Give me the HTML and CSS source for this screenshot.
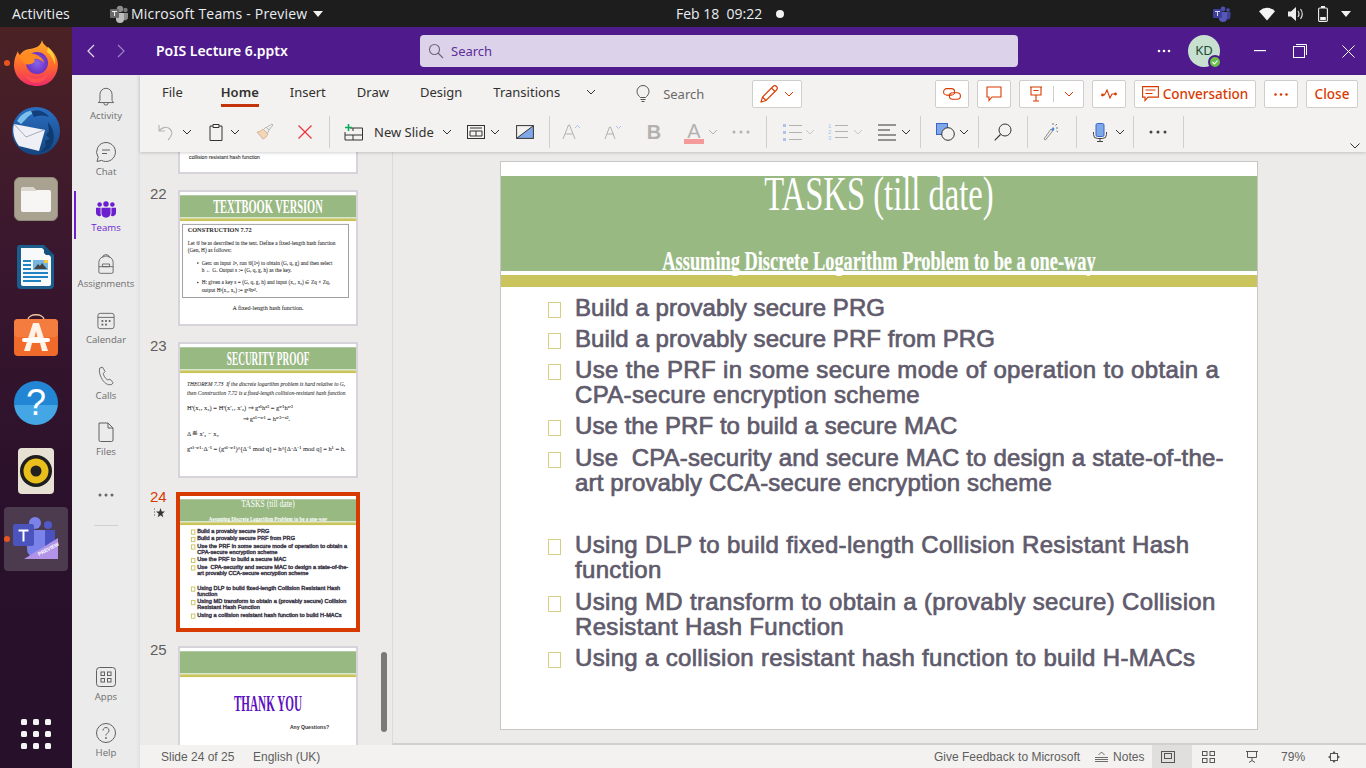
FILE: index.html
```html
<!DOCTYPE html>
<html lang="en">
<head>
<meta charset="utf-8">
<title>Microsoft Teams - Preview</title>
<link rel="stylesheet" href="styles.css">
</head>
<body>
<header class="topbar">
  <span class="activities">Activities</span>
  <svg class="app-mini" width="20" height="18" viewBox="0 0 20 18"><circle cx="11" cy="4" r="3.2" fill="#8d8d8d"/><circle cx="16.5" cy="5" r="2.2" fill="#777"/><path d="M7 8h8v6a4 4 0 0 1-8 0z" fill="#bdbdbd"/><path d="M15 8h4v5a3 3 0 0 1-4 2z" fill="#8a8a8a"/><rect x="1" y="4" width="9" height="9" rx="1" fill="#6a6a6a"/><path d="M3 6h5v1H6v4H5V7H3z" fill="#eee"/></svg>
  <span class="app-name">Microsoft Teams - Preview</span>
  <svg class="tri" width="10" height="6" viewBox="0 0 10 6"><path d="M0 0h10L5 6z" fill="#f2f2f2"/></svg>
  <span class="clock">Feb 18&nbsp; 09:22</span>
  <span class="rec-dot"></span>
  <svg class="tray-teams" width="18" height="16" viewBox="0 0 18 16"><circle cx="10" cy="3" r="2.4" fill="#4b4fae"/><circle cx="15" cy="4" r="1.8" fill="#4b4fae"/><path d="M6 6h8v6a4 4 0 0 1-8 0z" fill="#5558b8"/><path d="M14 6h3.500v5a3 3 0 0 1-3.500 2.500z" fill="#3f4296"/><rect x="0" y="3" width="9" height="9" rx="1" fill="#3d3f9a"/><path d="M2 5h5v1H5v4H4V6H2z" fill="#d8d8f0"/></svg>
  <svg class="tray-wifi" width="16" height="14" viewBox="0 0 16 14"><path d="M0 4.200Q8-2.500 16 4.200L8 13.500z" fill="#f4f4f4"/></svg>
  <svg class="tray-vol" width="16" height="14" viewBox="0 0 16 14"><path d="M0 4.500h3L8 0v14L3 9.500H0z" fill="#eee"/><path d="M10 4q2 3 0 6M12.500 2q3.500 5 0 10" stroke="#ddd" stroke-width="1.200" fill="none"/></svg>
  <svg class="tray-bat" width="10" height="16" viewBox="0 0 10 16"><rect x=".6" y="2" width="8.800" height="13.400" rx="1.200" fill="none" stroke="#eee" stroke-width="1.100"/><rect x="3" y="0" width="4" height="2" fill="#eee"/><rect x="2.200" y="11" width="5.600" height="3" fill="#eee"/></svg>
  <svg class="tray-tri" width="10" height="6" viewBox="0 0 10 6"><path d="M0 0h10L5 6z" fill="#f2f2f2"/></svg>
</header>

<div class="desktop">
  <nav class="dock">
    <div class="dock-cell">
      <span class="run-dot"></span>
      <svg width="48" height="48" viewBox="0 0 48 48"><defs><linearGradient id="ff1" x1="0" y1="0" x2="0" y2="1"><stop offset="0" stop-color="#ffb12a"/><stop offset=".55" stop-color="#ff6a2c"/><stop offset="1" stop-color="#ee2a6b"/></linearGradient><radialGradient id="ff2"><stop offset="0" stop-color="#8a63ec"/><stop offset="1" stop-color="#6a32c0"/></radialGradient></defs><path d="M30 1c1 6 7 7 11 12 5 6 6 13 4 19-3 10-11 15-20 15C12 47 2 38 2 26c0-6 2-10 4-14 0 2 1 3 2 4 2-4 7-6 10-6 6-1 11-3 12-9z" fill="url(#ff1)"/><circle cx="25" cy="24" r="11" fill="url(#ff2)"/><path d="M7 18c5-4 12-5 18-2 4 2 7 5 7 8-2-3-7-5-10-4 2 2 0 4-3 5-4 1-7 0-8-2-1-2-3-3-4-5z" fill="#ff8a1f"/><path d="M36 8c5 4 8 11 7 18-1-5-4-10-8-13z" fill="#ffcf3a"/><path d="M12 34c5 7 17 8 24 1-2 6-7 9-12 9-5 0-10-4-12-10z" fill="#ff4f50"/></svg>
    </div>
    <div class="dock-cell">
      <svg width="50" height="50" viewBox="0 0 50 50"><defs><linearGradient id="tb1" x1="0" y1="0" x2="0" y2="1"><stop offset="0" stop-color="#2a6fc4"/><stop offset="1" stop-color="#15457f"/></linearGradient></defs><circle cx="25" cy="25" r="24" fill="url(#tb1)"/><path d="M6 15c5-9 15-13 24-9-7 0-12 3-15 7l-5 5z" fill="#7cc0ee"/><path d="M20 5c6-2 14 0 18 6-5-2-10-2-15 0z" fill="#123f7a"/><path d="M3 18l26 5 5 1-6 21-20-5C3 34 1 25 3 18z" fill="#eef0f6"/><path d="M3 18l12 13 18-7" fill="none" stroke="#a8adbd" stroke-width="1"/><path d="M37 16c7 8 8 19 1 27l-9 4 6-7-1-5 5-2-4-4 3-4z" fill="#0f3a70"/></svg>
    </div>
    <div class="dock-cell">
      <div class="files-tile"><svg width="32" height="28" viewBox="0 0 32 28"><path d="M1 5a3 3 0 0 1 3-3h9l3 3h13a2 2 0 0 1 2 2v18a2 2 0 0 1-2 2H3a2 2 0 0 1-2-2z" fill="#f7f6f4"/><path d="M1 5a3 3 0 0 1 3-3h9l4 4H1z" fill="#dcd8cf"/></svg></div>
    </div>
    <div class="dock-cell">
      <svg width="38" height="46" viewBox="0 0 38 46"><path d="M3 1h24l10 10v30a4 4 0 0 1-4 4H4a4 4 0 0 1-4-4V4a3 3 0 0 1 3-3z" fill="#1b5e8e"/><path d="M4 4h21l9 9v27a2 2 0 0 1-2 2H6a2 2 0 0 1-2-2z" fill="#f8f9fa"/><path d="M27 1l10 10h-8l-2-2z" fill="#14517c"/><g fill="#2283c3"><rect x="6" y="16" width="8" height="2"/><rect x="6" y="20" width="8" height="2"/><rect x="6" y="24" width="8" height="2"/><rect x="6" y="28" width="25" height="2"/><rect x="6" y="32" width="25" height="2"/><rect x="6" y="36" width="18" height="2"/></g><rect x="16" y="16" width="15" height="10" fill="#74b6e0"/><path d="M17 25l4-5 2 2 2-3 5 6z" fill="#444"/><rect x="27" y="16" width="4" height="3" fill="#f5c842"/></svg>
    </div>
    <div class="dock-cell">
      <svg width="44" height="44" viewBox="0 0 44 44"><path d="M14 7c0-7 16-7 16 0" fill="none" stroke="#f0c8a0" stroke-width="1.500"/><rect y="6" width="44" height="37" rx="4" fill="#f06a2c"/><rect y="6" width="44" height="18" rx="4" fill="#f47c3e"/><path d="M19 10h6l9 28h-6l-2-8h-8l-2 8h-6zM20.500 24h3l-1.500-6z" fill="#fff3e8"/><rect x="8" y="25" width="28" height="4" rx="2" fill="#fff"/></svg>
    </div>
    <div class="dock-cell">
      <div class="help-tile">?</div>
    </div>
    <div class="dock-cell">
      <svg width="38" height="46" viewBox="0 0 38 46"><rect width="36" height="46" x="1" rx="4" fill="#e6e1d3"/><circle cx="19" cy="23" r="16" fill="#1e1e1e"/><circle cx="19" cy="23" r="12.500" fill="#e8bf1b"/><circle cx="19" cy="23" r="5.500" fill="#222"/></svg>
    </div>
    <div class="dock-cell dock-active">
      <span class="run-dot"></span>
      <svg width="46" height="44" viewBox="0 0 46 44"><circle cx="22" cy="6" r="6" fill="#7b83eb"/><circle cx="35" cy="8" r="4" fill="#5059c9"/><path d="M30 13h12v14l-12 6z" fill="#4a52c0"/><path d="M14 13h18v18a9 9 0 0 1-9 10 9 9 0 0 1-9-10z" fill="#7b83eb"/><rect y="7" width="21" height="22" rx="2" fill="#4b53bc"/><path d="M5.500 12.500h10v2h-4v10h-2v-10h-4z" fill="#fff"/><path d="M11 42l34-21v21z" fill="#b293e8"/><text x="26" y="39" class="preview-tag" transform="rotate(-28 26 39)">PREVIEW</text></svg>
    </div>
    <div class="grid-dots"><i></i><i></i><i></i><i></i><i></i><i></i><i></i><i></i><i></i></div>
  </nav>

  <div class="app">
    <div class="titlebar">
      <svg class="nav-back" width="10" height="14" viewBox="0 0 10 14"><path d="M8 1L2 7l6 6" fill="none" stroke="#e4dbf0" stroke-width="1.200"/></svg>
      <svg class="nav-fwd" width="10" height="14" viewBox="0 0 10 14"><path d="M2 1l6 6-6 6" fill="none" stroke="#9d82c4" stroke-width="1.200"/></svg>
      <span class="doc-title">PoIS Lecture 6.pptx</span>
      <div class="searchbox">
        <svg width="16" height="16" viewBox="0 0 16 16"><circle cx="6.500" cy="6.500" r="5" fill="none" stroke="#6b6478" stroke-width="1.100"/><path d="M10 10l5 5" stroke="#6b6478" stroke-width="1.100"/></svg>
        <span>Search</span>
      </div>
      <svg class="more-top" width="14" height="4" viewBox="0 0 14 4"><circle cx="2" cy="2" r="1.300" fill="#fff"/><circle cx="7" cy="2" r="1.300" fill="#fff"/><circle cx="12" cy="2" r="1.300" fill="#fff"/></svg>
      <div class="avatar">KD<span class="presence"><svg width="8" height="8" viewBox="0 0 8 8"><path d="M1.500 4l2 2 3-3.500" fill="none" stroke="#fff" stroke-width="1.100"/></svg></span></div>
      <svg class="win-min" width="12" height="2" viewBox="0 0 12 2"><rect width="12" height="1.200" fill="#fff"/></svg>
      <svg class="win-max" width="14" height="14" viewBox="0 0 14 14"><rect x=".5" y="2.500" width="11" height="11" fill="none" stroke="#fff"/><path d="M3 .5h10.500V11" fill="none" stroke="#fff"/></svg>
      <svg class="win-close" width="13" height="13" viewBox="0 0 13 13"><path d="M.5.5l12 12M12.500.5l-12 12" stroke="#fff"/></svg>
    </div>

    <div class="workspace">
      <aside class="rail">
        <div class="rail-item"><svg width="18" height="19" viewBox="0 0 20 22"><path d="M3 16V8.500a7 7 0 0 1 14 0V16l2 2H1zM7.500 18.500a2.500 2.500 0 0 0 5 0" fill="none" stroke="#616161" stroke-width="1.100"/></svg><span>Activity</span></div>
        <div class="rail-item"><svg width="20" height="20" viewBox="0 0 20 20"><path d="M10 .5a9.500 9.500 0 1 1-4.500 17.900L1 19.500l1.200-4.200A9.500 9.500 0 0 1 10 .5zM6 8h8M6 11.500h5" fill="none" stroke="#616161"/></svg><span>Chat</span></div>
        <div class="rail-item rail-on"><svg width="20" height="17" viewBox="0 0 22 18"><g fill="#6b1fd0"><circle cx="11" cy="3" r="3"/><circle cx="4" cy="3.500" r="2.500"/><circle cx="18" cy="3.500" r="2.500"/><path d="M6 7h10v6a5 5 0 0 1-10 0z"/><path d="M0 7h5v6c0 1 .3 2 .6 3A4 4 0 0 1 0 12zM22 7h-5v6c0 1-.3 2-.6 3A4 4 0 0 0 22 12z"/></g></svg><span>Teams</span></div>
        <div class="rail-item"><svg width="16" height="20" viewBox="0 0 18 22"><path d="M1 20V9a8 7 0 0 1 16 0v11a1.500 1.500 0 0 1-1.500 1.500h-13A1.500 1.500 0 0 1 1 20zM5.500 4V3a3.500 2.500 0 0 1 7 0v1M1 14h16M5 11h8v3H5z" fill="none" stroke="#616161"/></svg><span>Assignments</span></div>
        <div class="rail-item"><svg width="18" height="18" viewBox="0 0 20 20"><rect x="1" y="1.500" width="18" height="17" rx="2.500" fill="none" stroke="#616161"/><path d="M1 6h18" stroke="#616161"/><g fill="#616161"><rect x="5" y="9" width="2" height="2"/><rect x="9" y="9" width="2" height="2"/><rect x="13" y="9" width="2" height="2"/><rect x="5" y="13" width="2" height="2"/><rect x="9" y="13" width="2" height="2"/></g></svg><span>Calendar</span></div>
        <div class="rail-item"><svg width="16" height="20" viewBox="0 0 18 21"><path d="M2 1.500l3-1 3 5-2 2c0 2 2 6 5 7.500l2.500-1 3.500 4-1.500 2c-5 1.500-9-2-12-8C1.500 8 1 4 2 1.500z" fill="none" stroke="#616161"/></svg><span>Calls</span></div>
        <div class="rail-item"><svg width="16" height="20" viewBox="0 0 16 20"><path d="M1 1h9l5 5v12a1.500 1.500 0 0 1-1.500 1.500h-11A1.500 1.500 0 0 1 1 18zM10 1v5h5" fill="none" stroke="#616161"/></svg><span>Files</span></div>
        <div class="rail-more"><svg width="16" height="4" viewBox="0 0 16 4"><circle cx="2" cy="2" r="1.500" fill="#666"/><circle cx="8" cy="2" r="1.500" fill="#666"/><circle cx="14" cy="2" r="1.500" fill="#666"/></svg></div>
        <div class="rail-div"></div>
        <div class="rail-item rail-push"><svg width="20" height="20" viewBox="0 0 20 20"><rect x=".5" y=".5" width="19" height="19" rx="3" fill="none" stroke="#616161"/><g fill="none" stroke="#616161"><rect x="5" y="5" width="3.500" height="3.500"/><rect x="11.500" y="5" width="3.500" height="3.500"/><rect x="5" y="11.500" width="3.500" height="3.500"/><rect x="11.500" y="11.500" width="3.500" height="3.500"/></g></svg><span>Apps</span></div>
        <div class="rail-item"><svg width="20" height="20" viewBox="0 0 20 20"><circle cx="10" cy="10" r="9.500" fill="none" stroke="#616161"/><path d="M7 7.500a3 3 0 1 1 4.500 2.600c-1 .6-1.500 1-1.500 2.400" fill="none" stroke="#616161"/><circle cx="10" cy="15" r=".9" fill="#616161"/></svg><span>Help</span></div>
      </aside>

      <main class="office">
        <section class="ribbon">
          <div class="ribbon-top">
            <span class="tab tab-first">File</span>
            <span class="tab tab-on">Home</span>
            <span class="tab">Insert</span>
            <span class="tab">Draw</span>
            <span class="tab">Design</span>
            <span class="tab">Transitions</span>
            <svg class="c tabs-more" width="10" height="6" viewBox="0 0 10 6"><path d="M1 1l4 4 4-4" fill="none" stroke="#333"/></svg>
            <svg class="bulb" width="14" height="18" viewBox="0 0 14 18"><path d="M4.500 12.500C3 11 1 9.500 1 6.500a6 6 0 0 1 12 0c0 3-2 4.500-3.500 6zM4.500 14.500h5M5.500 16.500h3" fill="none" stroke="#555"/></svg>
            <span class="tell">Search</span>
            <div class="pen-btn">
              <svg width="18" height="18" viewBox="0 0 18 18"><path d="M1 17l1.500-5L13 1.500a2 2 0 0 1 3.500 3.500L6 15.500zM2.500 12L6 15.500M11.500 3l3.500 3.500" fill="none" stroke="#d83b01" stroke-width="1.100"/></svg>
              <svg width="10" height="6" viewBox="0 0 10 6"><path d="M1 1l4 4 4-4" fill="none" stroke="#d83b01"/></svg>
            </div>
            <div class="actions">
              <div class="act act-icon"><svg width="18" height="12" viewBox="0 0 18 12"><g fill="none" stroke="#d83b01" stroke-width="1.100"><rect x=".6" y=".6" width="11" height="6.500" rx="3.200"/><rect x="6.400" y="4.800" width="11" height="6.500" rx="3.200"/></g></svg></div>
              <div class="act act-icon"><svg width="16" height="16" viewBox="0 0 16 16"><path d="M1 1h14v10H6l-3 3.500V11H1z" fill="none" stroke="#d83b01" stroke-width="1.100"/></svg></div>
              <div class="act act-split">
                <svg width="14" height="16" viewBox="0 0 14 16"><path d="M1 1h12M2 1v8h10V1M7 9v6M4 15h6M4.500 4.500h5" fill="none" stroke="#d83b01" stroke-width="1.100"/></svg>
                <i class="act-sep"></i>
                <svg width="10" height="6" viewBox="0 0 10 6"><path d="M1 1l4 4 4-4" fill="none" stroke="#d83b01"/></svg>
              </div>
              <div class="act act-icon"><svg width="16" height="10" viewBox="0 0 16 10"><path d="M1 6h2.500L6 1l3 8 2-4h4" fill="none" stroke="#d83b01" stroke-width="1.100"/><circle cx="1.500" cy="6" r="1.400" fill="#d83b01"/><circle cx="14.500" cy="5" r="1.400" fill="#d83b01"/></svg></div>
              <div class="act act-conv"><svg width="17" height="16" viewBox="0 0 17 16"><path d="M.6.600h15.800v10.500H6l-3 3.500v-3.500H.6zM3.500 4h10M3.500 7.500h7" fill="none" stroke="#d83b01" stroke-width="1.100"/></svg><span>Conversation</span></div>
              <div class="act act-icon"><svg width="14" height="3" viewBox="0 0 14 3"><circle cx="1.500" cy="1.500" r="1.300" fill="#d83b01"/><circle cx="7" cy="1.500" r="1.300" fill="#d83b01"/><circle cx="12.500" cy="1.500" r="1.300" fill="#d83b01"/></svg></div>
              <div class="act act-close">Close</div>
            </div>
          </div>
          <div class="ribbon-tools">
            <span class="t"><svg width="18" height="17" viewBox="0 0 18 17"><path d="M1 1v6h6M1 7c3-4 8-5 11-2 3 3 2 7-2 11" fill="none" stroke="#b5b3b1" stroke-width="1.100"/></svg></span>
            <span class="c g4"><svg width="10" height="6" viewBox="0 0 10 6"><path d="M1 1l4 4 4-4" fill="none" stroke="#333"/></svg></span>
            <span class="t g13"><svg width="14" height="18" viewBox="0 0 14 18"><path d="M1 3h3V1.500h6V3h3v14.500H1z" fill="none" stroke="#333"/><path d="M4 3v1.500h6V3" fill="none" stroke="#333"/></svg></span>
            <span class="c g3"><svg width="10" height="6" viewBox="0 0 10 6"><path d="M1 1l4 4 4-4" fill="none" stroke="#333"/></svg></span>
            <span class="t g14"><svg width="18" height="18" viewBox="0 0 18 18"><path d="M1 9l6 7c2-.5 4-3 5-5L7 6C5 8 3 9 1 9z" fill="#f1d6b8" stroke="#cfa77b" stroke-width=".8"/><path d="M8 6l2-2 3 3-1.500 3M11 4l5-3 1 1-4 5" fill="#eee" stroke="#aaa" stroke-width=".8"/></svg></span>
            <span class="t g20"><svg width="14" height="14" viewBox="0 0 14 14"><path d="M.5.500l13 13M13.500.500l-13 13" stroke="#e5343a" stroke-width="1.200"/></svg></span>
            <i class="sep g14"></i>
            <span class="t g13"><svg width="19" height="17" viewBox="0 0 19 17"><path d="M6 4h12.500v12H1V8M1 11h17M9 11v5M9 4v3" fill="none" stroke="#333"/><path d="M1 3.500h7M4.500 0v7" stroke="#10a85a" stroke-width="1.600"/></svg></span>
            <span class="rb-label g11">New Slide</span>
            <span class="c g6"><svg width="10" height="6" viewBox="0 0 10 6"><path d="M1 1l4 4 4-4" fill="none" stroke="#333"/></svg></span>
            <span class="t g13"><svg width="18" height="14" viewBox="0 0 18 14"><rect x=".5" y=".5" width="17" height="13" fill="none" stroke="#333"/><path d="M3 3h12M3 6h12v5H3zM9 6v5" fill="none" stroke="#333"/></svg></span>
            <span class="c g3"><svg width="10" height="6" viewBox="0 0 10 6"><path d="M1 1l4 4 4-4" fill="none" stroke="#333"/></svg></span>
            <span class="t g14"><svg width="18" height="14" viewBox="0 0 18 14"><path d="M1 13L17 1v12z" fill="#7fa8e8"/><rect x=".6" y=".6" width="16.800" height="12.800" fill="none" stroke="#333"/><path d="M1 13L17 1" stroke="#333"/></svg></span>
            <i class="sep g14"></i>
            <span class="t g12"><svg width="20" height="16" viewBox="0 0 20 16"><path d="M1 15L6.500 1h1L13 15M3.500 10h7" fill="none" stroke="#b3b1af"/><path d="M13 4l2.500-2.500L18 4" fill="none" stroke="#a9c4ec"/></svg></span>
            <span class="t g21"><svg width="18" height="14" viewBox="0 0 18 14"><path d="M1 14L5.500 2h1L11 14M3 9h7" fill="none" stroke="#b3b1af"/><path d="M12 1l2.500 2.500L17 1" fill="none" stroke="#a9c4ec"/></svg></span>
            <span class="t g21 bold-b">B</span>
            <span class="t g20 font-a"><span>A</span><i></i></span>
            <span class="c g3"><svg width="10" height="6" viewBox="0 0 10 6"><path d="M1 1l4 4 4-4" fill="none" stroke="#b3b1af"/></svg></span>
            <span class="t g12"><svg width="18" height="4" viewBox="0 0 18 4"><circle cx="2" cy="2" r="1.500" fill="#b3b1af"/><circle cx="9" cy="2" r="1.500" fill="#b3b1af"/><circle cx="16" cy="2" r="1.500" fill="#b3b1af"/></svg></span>
            <i class="sep g15"></i>
            <span class="t g15"><svg width="20" height="17" viewBox="0 0 20 17"><g fill="#a9c4ec"><rect x="1" width="3" height="3"/><rect x="1" y="7" width="3" height="3"/><rect x="1" y="14" width="3" height="3"/></g><path d="M7 1.500h13M7 8.500h13M7 15.500h13" stroke="#b3b1af"/></svg></span>
            <span class="c g2"><svg width="10" height="6" viewBox="0 0 10 6"><path d="M1 1l4 4 4-4" fill="none" stroke="#c8c6c4"/></svg></span>
            <span class="t g12"><svg width="20" height="18" viewBox="0 0 20 18"><g class="nums"><text x="0" y="5">1</text><text x="0" y="11">2</text><text x="0" y="17">3</text></g><path d="M7 2.500h13M7 8.500h13M7 14.500h13" stroke="#b3b1af"/></svg></span>
            <span class="c g4"><svg width="10" height="6" viewBox="0 0 10 6"><path d="M1 1l4 4 4-4" fill="none" stroke="#c8c6c4"/></svg></span>
            <span class="t g13"><svg width="18" height="17" viewBox="0 0 18 17"><path d="M0 1h18M0 6h12M0 11h18M0 16h18" stroke="#333"/></svg></span>
            <span class="c g3"><svg width="10" height="6" viewBox="0 0 10 6"><path d="M1 1l4 4 4-4" fill="none" stroke="#333"/></svg></span>
            <i class="sep g8"></i>
            <span class="t g14"><svg width="19" height="18" viewBox="0 0 19 18"><rect x=".5" y=".5" width="11" height="11" fill="#7fa8e8" stroke="#3c63c8"/><circle cx="12" cy="11" r="6.300" fill="#f3f2f1" stroke="#333"/></svg></span>
            <span class="c g3"><svg width="10" height="6" viewBox="0 0 10 6"><path d="M1 1l4 4 4-4" fill="none" stroke="#333"/></svg></span>
            <i class="sep g8"></i>
            <span class="t g14"><svg width="18" height="18" viewBox="0 0 18 18"><circle cx="11" cy="7" r="6" fill="none" stroke="#333"/><path d="M6.500 11.500L.7 17.300" stroke="#333" stroke-width="1.100"/></svg></span>
            <i class="sep g14"></i>
            <span class="t g13"><svg width="16" height="18" viewBox="0 0 16 18"><path d="M1 16l7-10 2 1.500-7.500 9.500z" fill="#eee" stroke="#777" stroke-width=".8"/><path d="M8 7l2-3 1.500 1.500-1 2.500z" fill="#4a88d8"/><path d="M10 0v2M15 5h-2M14 1l-1.500 1.500M15 9l-1.500-1" stroke="#555" stroke-width=".8"/></svg></span>
            <i class="sep g15"></i>
            <span class="t g13"><svg width="14" height="19" viewBox="0 0 14 19"><rect x="3" y=".5" width="8" height="13" rx="1.500" fill="#7fa8e8" stroke="#3c63c8"/><path d="M.5 9v2.500A4 4 0 0 0 4.500 15.500h5a4 4 0 0 0 4-4V9M7 15.500v3M4 18.500h6" fill="none" stroke="#444"/></svg></span>
            <span class="c g4"><svg width="10" height="6" viewBox="0 0 10 6"><path d="M1 1l4 4 4-4" fill="none" stroke="#333"/></svg></span>
            <i class="sep g7"></i>
            <span class="t g14"><svg width="18" height="4" viewBox="0 0 18 4"><circle cx="2" cy="2" r="1.500" fill="#444"/><circle cx="9" cy="2" r="1.500" fill="#444"/><circle cx="16" cy="2" r="1.500" fill="#444"/></svg></span>
            <i class="sep g15"></i>
            <svg class="rb-collapse" width="10" height="6" viewBox="0 0 10 6"><path d="M.5.500L5 5l4.500-4.500" fill="none" stroke="#333"/></svg>
          </div>
        </section>

        <div class="middle">
          <div class="thumbs">
            <div class="thumb-list">
              <div class="thumb-row">
                <span class="num"></span>
                <div class="thumb"><div class="slide s-scale"><div class="band"></div><div class="rule"></div><p class="tail">collision resistant hash function</p></div></div>
              </div>
              <div class="thumb-row">
                <span class="num">22</span>
                <div class="thumb"><div class="slide s-scale">
                  <div class="band band-c"><span class="band-title">TEXTBOOK VERSION</span></div><div class="rule"></div>
                  <div class="cbox">
                    <b>CONSTRUCTION 7.72</b>
                    <p>Let 𝒢 be as described in the text. Define a fixed-length hash function (Gen, H) as follows:</p>
                    <ul><li>Gen: on input 1ⁿ, run 𝒢(1ⁿ) to obtain (G, q, g) and then select h ← G. Output s := (G, q, g, h) as the key.</li>
                    <li>H: given a key s = (G, q, g, h) and input (x₁, x₂) ∈ Zq × Zq, output Hˢ(x₁, x₂) := gˣ¹hˣ².</li></ul>
                  </div>
                  <p class="ccap">A fixed-length hash function.</p>
                </div></div>
              </div>
              <div class="thumb-row">
                <span class="num">23</span>
                <div class="thumb"><div class="slide s-scale">
                  <div class="band band-c"><span class="band-title band-title-n">SECURITY PROOF</span></div><div class="rule"></div>
                  <div class="proof">
                    <p class="thm">THEOREM 7.73&nbsp; If the discrete logarithm problem is hard relative to G, then Construction 7.72 is a fixed-length collision-resistant hash function</p>
                    <p class="eq">Hˢ(x₁, x₂) = Hˢ(x′₁, x′₂) ⇒ gˣ¹hˣ² = gˣ′¹hˣ′²</p>
                    <p class="eq eq-r">⇒ gˣ¹⁻ˣ′¹ = hˣ′²⁻ˣ².</p>
                    <p class="eq">Δ ≝ x′₂ − x₂</p>
                    <p class="eq">gˣ¹⁻ˣ′¹·Δ⁻¹ = (gˣ¹⁻ˣ′¹)^[Δ⁻¹ mod q] = h^[Δ·Δ⁻¹ mod q] = h¹ = h.</p>
                  </div>
                </div></div>
              </div>
              <div class="thumb-row">
                <div class="num num-on">24<svg width="11" height="10" viewBox="0 0 11 10"><path d="M6.500 0l1.200 3.500H11L8.300 5.700l1 3.600-2.800-2.100-2.800 2.100 1-3.600L2 3.500h3.300z" fill="#333"/><path d="M0 1h2M0 4h2M0 7h2" stroke="#555" stroke-dasharray="1 1"/></svg></div>
                <div class="thumb thumb-on"><div class="slide s-scale">
                  <div class="band"><span class="title">TASKS (till date)</span><span class="sub">Assuming Discrete Logarithm Problem to be a one-way</span></div><div class="rule"></div>
                  <ul class="points">
                    <li class="ls-b">Build a provably secure PRG</li>
                    <li class="ls-b">Build a provably secure PRF from PRG</li>
                    <li>Use the PRF in some secure mode of operation to obtain a CPA-secure encryption scheme</li>
                    <li class="ls-b m7">Use the PRF to build a secure MAC</li>
                    <li class="ls-c">Use&nbsp; CPA-security and secure MAC to design a state-of-the-art provably CCA-secure encryption scheme</li>
                    <li class="after-gap m7">Using DLP to build fixed-length Collision Resistant Hash function</li>
                    <li>Using MD transform to obtain a (provably secure) Collision Resistant Hash Function</li>
                    <li>Using a collision resistant hash function to build H-MACs</li>
                  </ul>
                </div></div>
              </div>
              <div class="thumb-row">
                <span class="num">25</span>
                <div class="thumb"><div class="slide s-scale">
                  <div class="band"></div><div class="rule"></div>
                  <p class="thanks"><span>THANK YOU</span></p>
                  <p class="anyq">Any Questions?</p>
                </div></div>
              </div>
            </div>
            <div class="scroll-thumb"></div>
          </div>
          <div class="canvas">
            <div class="slide slide-main">
              <div class="band"><span class="title">TASKS (till date)</span><span class="sub">Assuming Discrete Logarithm Problem to be a one-way</span></div><div class="rule"></div>
              <ul class="points">
                <li class="ls-b">Build a provably secure PRG</li>
                <li class="ls-b">Build a provably secure PRF from PRG</li>
                <li>Use the PRF in some secure mode of operation to obtain a CPA-secure encryption scheme</li>
                <li class="ls-b m7">Use the PRF to build a secure MAC</li>
                <li class="ls-c">Use&nbsp; CPA-security and secure MAC to design a state-of-the-art provably CCA-secure encryption scheme</li>
                <li class="after-gap m7">Using DLP to build fixed-length Collision Resistant Hash function</li>
                <li>Using MD transform to obtain a (provably secure) Collision Resistant Hash Function</li>
                <li>Using a collision resistant hash function to build H-MACs</li>
              </ul>
            </div>
          </div>
        </div>

        <footer class="status">
          <span class="st-slide">Slide 24 of 25</span>
          <span class="st-lang">English (UK)</span>
          <span class="st-fb">Give Feedback to Microsoft</span>
          <svg class="st-notes" width="13" height="11" viewBox="0 0 13 11"><path d="M0 6.500h13M0 8.500h13M0 10.500h13M3.500 4L6.500 1l3 3" fill="none" stroke="#605e5c" stroke-width=".9"/></svg>
          <span class="st-ntext">Notes</span>
          <span class="st-view st-view-on"><svg width="14" height="12" viewBox="0 0 14 12"><rect x=".5" y=".5" width="13" height="11" fill="none" stroke="#555"/><rect x="3.500" y="2.500" width="7" height="5" fill="none" stroke="#555"/></svg></span>
          <span class="st-view st-sort"><svg width="13" height="12" viewBox="0 0 13 12"><g fill="none" stroke="#555"><rect x=".5" y=".5" width="4.500" height="4"/><rect x="8" y=".5" width="4.500" height="4"/><rect x=".5" y="7.500" width="4.500" height="4"/><rect x="8" y="7.500" width="4.500" height="4"/></g></svg></span>
          <span class="st-view st-pres"><svg width="12" height="12" viewBox="0 0 12 12"><path d="M0 .5h12M1.500.5v6h9v-6M6 6.500v3M3 11.500l3-2 3 2" fill="none" stroke="#555"/></svg></span>
          <span class="st-zoom">79%</span>
          <svg class="st-fit" width="12" height="12" viewBox="0 0 12 12"><rect x="2.500" y="2.500" width="7" height="7" fill="none" stroke="#555"/><path d="M6 0L4.500 2h3zM6 12l-1.500-2h3zM0 6l2-1.500v3zM12 6l-2-1.500v3z" fill="#555"/></svg>
        </footer>
      </main>
    </div>
  </div>
</div>
</body>
</html>
```

FILE: styles.css
```css
* { box-sizing: border-box; }
html, body { margin: 0; padding: 0; }
body { width: 1366px; height: 768px; overflow: hidden; display: flex; flex-direction: column; font-family: "Noto Sans", sans-serif; background: #1d1d1d; }
svg { display: block; flex: none; }
p, ul { margin: 0; padding: 0; }

/* top bar */
.topbar { height: 27px; flex: none; background: #1d1d1d; display: flex; align-items: center; color: #e9eef2; font-family: "Open Sans", sans-serif; font-size: 14px; padding-left: 12px; }
.activities { width: 97px; }
.app-mini { margin-right: 2px; }
.app-name { width: 176px; margin-right: 6px; white-space: nowrap; letter-spacing: .2px; }
.clock { margin-left: 353px; width: 97px; white-space: nowrap; font-size: 14px; }
.rec-dot { width: 8px; height: 8px; border-radius: 50%; background: #f2f2f2; margin-left: 3px; }
.tray-teams { margin-left: 429px; }
.tray-wifi { margin-left: 28px; }
.tray-vol { margin-left: 13px; }
.tray-bat { margin-left: 14px; }
.tray-tri { margin-left: 13px; }

/* desktop */
.desktop { flex: 1; display: flex; min-height: 0; }
.dock { width: 72px; flex: none; padding-top: 2px; display: flex; flex-direction: column; background: linear-gradient(180deg, #4b2224 0%, #3a172e 30%, #2a102b 65%, #26102a 100%); }
.dock-cell { height: 68px; flex: none; display: flex; align-items: center; justify-content: center; position: relative; }
.run-dot { position: absolute; left: 4px; top: 31px; width: 6px; height: 6px; border-radius: 50%; background: #e95420; z-index: 1; }
.dock-active::before { content: ""; position: absolute; left: 4px; right: 4px; top: 2px; bottom: 2px; border-radius: 4px; background: #4c3a4e; }
.dock-active svg { position: relative; }
.files-tile { width: 44px; height: 44px; border-radius: 6px; background: #a9a291; display: flex; align-items: center; justify-content: center; border: 1px solid #8f8a7c; }
.help-tile { width: 44px; height: 44px; border-radius: 50%; background: linear-gradient(180deg, #2286d5 0 55%, #45a6e6 55%); color: #fff; font: 36px/44px "Liberation Sans", sans-serif; text-align: center; }
.preview-tag { font: bold 5px "Liberation Sans", sans-serif; fill: #fff; }
.grid-dots { margin-top: auto; margin-bottom: 19px; align-self: center; display: grid; grid-template-columns: repeat(3, 6px); gap: 6px; }
.grid-dots i { width: 6px; height: 6px; border-radius: 1.500px; background: #f4f4f4; }

.app { flex: 1; display: flex; flex-direction: column; min-width: 0; }
.titlebar { height: 48px; flex: none; background: #4f1a8c; display: flex; align-items: center; color: #fff; }
.nav-back { margin-left: 14px; }
.nav-fwd { margin-left: 20px; }
.doc-title { margin: -2px 0 0 30px; width: 264px; font-size: 14px; font-weight: 600; white-space: nowrap; }
.searchbox { width: 598px; height: 32px; border-radius: 4px; background: #dcd2ea; display: flex; align-items: center; gap: 7px; padding-left: 8px; color: #5c2d98; font-size: 13px; }
.more-top { margin-left: 139px; }
.avatar { position: relative; margin-left: 17px; width: 32px; height: 32px; border-radius: 50%; background: #c7e0d0; color: #1c4a33; font-size: 13px; line-height: 30px; text-align: center; }
.presence { position: absolute; right: -2px; bottom: -2px; width: 10px; height: 10px; border-radius: 50%; background: #6bbf4a; border: 2px solid #4f1a8c; display: flex; align-items: center; justify-content: center; box-sizing: content-box; }
.presence svg { width: 8px; height: 8px; }
.win-min { margin-left: 34px; }
.win-max { margin-left: 27px; }
.win-close { margin-left: 35px; }

.workspace { flex: 1; display: flex; min-height: 0; }
.rail { width: 68px; flex: none; background: #ebebeb; padding: 4px 0; display: flex; flex-direction: column; align-items: center; box-shadow: inset -4px 0 4px -3px #dcdcdc; }
.rail-item { position: relative; width: 64px; height: 48px; margin: 0 0 8px 2px; align-self: flex-start; flex: none; display: flex; flex-direction: column; align-items: center; justify-content: flex-end; gap: 3px; padding-bottom: 4px; font-size: 9.600px; line-height: 14px; color: #6e6e6e; font-family: "Open Sans", sans-serif; white-space: nowrap; }
.rail-item:last-child { margin-bottom: 0; }
.rail-on { color: #6b1fd0; }
.rail-on::before { content: ""; position: absolute; left: 0; top: 0; bottom: 0; width: 2px; background: #6b1fd0; }
.rail-more { height: 48px; display: flex; align-items: center; flex: none; }
.rail-div { width: 24px; height: 1px; background: #cfcfcf; margin-top: 6px; flex: none; }
.rail-push { margin-top: auto; }

.office { flex: 1; display: flex; flex-direction: column; min-width: 0; background: #ecebea; }
.ribbon { height: 77px; flex: none; background: #f3f2f1; box-shadow: 0 1px 3px rgba(0,0,0,.18); position: relative; z-index: 2; }
.ribbon-top { height: 37px; display: flex; align-items: center; font-size: 13px; color: #323130; }
.tab { margin: -3px 0 0 31px; position: relative; white-space: nowrap; }
.tab-first { margin-left: 22px; margin-right: 7px; }
.tab-on { font-weight: 600; }
.tab-on::after { content: ""; position: absolute; left: 0; right: 0; bottom: -6px; height: 3px; background: #c4320a; }
.tabs-more { margin: -3px 0 0 25px; }
.bulb { margin: 1px 0 0 39px; }
.tell { margin: 1px 0 0 13px; color: #6b6967; }
.pen-btn { margin: 1px 0 0 48px; width: 50px; height: 28px; border: 1px solid #d0cecc; border-radius: 2px; background: #fff; display: flex; align-items: center; justify-content: center; gap: 6px; }
.actions { margin: 1px 0 0 auto; padding-right: 8px; display: flex; gap: 8px; }
.act { height: 28px; border: 1px solid #d0cecc; border-radius: 2px; background: #fff; display: flex; align-items: center; justify-content: center; color: #d83b01; font-size: 13.500px; font-weight: 500; }
.act-icon { width: 34px; }
.act-split { width: 65px; gap: 0; }
.act-sep { width: 1px; height: 16px; background: #d0cecc; margin: 0 10px 0 10px; }
.act-conv { width: 122px; gap: 4px; }
.act-close { width: 52px; }
.ribbon-tools { height: 40px; display: flex; align-items: center; padding-left: 17px; position: relative; font-size: 13px; color: #323130; }
.t { width: 20px; flex: none; display: flex; align-items: center; justify-content: center; }
.c { width: 12px; flex: none; display: flex; align-items: center; justify-content: center; }
.sep { width: 1px; height: 32px; background: #d2d0ce; flex: none; }
.rb-label { width: 61px; flex: none; white-space: nowrap; }
.bold-b { font: bold 20px "Liberation Sans", sans-serif; color: #b3b1af; }
.font-a { position: relative; font: 20px/20px "Liberation Sans", sans-serif; color: #b3b1af; flex-direction: column; }
.font-a i { width: 20px; height: 5px; background: #f59a9a; margin-top: -2px; }
.nums text { font: 6px "Liberation Sans", sans-serif; fill: #a9c4ec; }
.rb-collapse { position: absolute; right: 6px; bottom: 3px; }
.g2 { margin-left: 2px; } .g3 { margin-left: 3px; } .g4 { margin-left: 4px; } .g6 { margin-left: 6px; } .g7 { margin-left: 7px; } .g8 { margin-left: 8px; } .g11 { margin-left: 11px; }
.g12 { margin-left: 12px; } .g13 { margin-left: 13px; } .g14 { margin-left: 14px; } .g15 { margin-left: 15px; } .g20 { margin-left: 20px; } .g21 { margin-left: 21px; }

/* middle */
.middle { flex: 1; display: flex; min-height: 0; }
.thumbs { width: 253px; flex: none; overflow: hidden; position: relative; border-right: 1px solid #dcdad8; background: #ecebea; }
.thumb-list { margin-top: -114px; padding-left: 10px; display: flex; flex-direction: column; gap: 16px; }
.thumb-row { display: flex; align-items: flex-start; height: 136px; flex: none; }
.num { width: 28px; margin-top: -6px; font: 15px/20px "Liberation Sans", sans-serif; color: #605e5c; flex: none; }
.num-on { color: #d83b01; margin-top: -7px; }
.num-on svg { margin: 1px 0 0 4px; }
.thumb { width: 180px; height: 136px; border: 2px solid #d6d4da; background: #fff; overflow: hidden; flex: none; }
.thumb-on { border-color: #d83b01; box-shadow: 0 0 0 2px #d83b01; overflow: visible; }
.thumb-on .s-scale { clip-path: inset(0); }
.scroll-thumb { position: absolute; left: 241px; top: 500px; width: 6px; height: 80px; border-radius: 3px; background: #7a7977; }

.canvas { flex: 1; padding: 10px 0 0 108px; border-bottom: 2px solid #d2d0ce; min-width: 0; }
.slide { width: 756px; height: 567px; background: #fff; padding-top: 14px; font-family: "Liberation Sans", sans-serif; flex: none; overflow: hidden; }
.slide-main { box-shadow: 0 0 0 1px #c8c6c4; }
.s-scale { transform: scale(.2328); transform-origin: 0 0; }
.band { height: 95px; background: #99b983; position: relative; text-align: center; color: #fff; }
.band-c { display: flex; align-items: center; justify-content: center; }
.rule { height: 12px; margin-top: 4px; background: #c9c55c; }
.title { position: absolute; left: 0; right: 0; top: -7px; font: 48px/50px "Liberation Serif", serif; transform: scaleX(.68); white-space: nowrap; }
.sub { position: absolute; left: 0; right: 0; top: 70px; font: bold 27px/30px "Liberation Serif", serif; transform: scaleX(.68); white-space: nowrap; -webkit-text-stroke: .2px #fff; }
.s-scale .sub { transform: scaleX(.8); }
.band-title { font: bold 85px/90px "Liberation Serif", serif; display: block; transform: scaleX(.527); white-space: nowrap; }
.band-title-n { transform: scaleX(.47); }

.points { list-style: none; padding: 8px 28px 0 74px; font-size: 24px; line-height: 25px; color: #5f5b6c; letter-spacing: .33px; -webkit-text-stroke: .7px #5f5b6c; }
.points li { position: relative; margin-bottom: 6px; }
.points li::before { content: ""; position: absolute; left: -27px; top: 7px; width: 11px; height: 14px; border: 1px solid #d8cf84; }
.points .ls-b { letter-spacing: .07px; }
.points .ls-c { letter-spacing: .15px; }
.points .m7 { margin-bottom: 7px; }
.points .after-gap { margin-top: 37px; }
.s-scale .points { padding-top: 12px; line-height: 26px; color: #45414f; -webkit-text-stroke: 2px #45414f; }
.s-scale .points .m7 { margin-bottom: 6px; }
.s-scale .points .after-gap { margin-top: 39px; }
.s-scale .points li::before { border: 4px solid #c9c55c; }

.tail { padding: 366px 0 0 39px; font: 22px "Liberation Sans", sans-serif; color: #333; -webkit-text-stroke: .4px #333; }
.cbox { margin: 12px 30px 0 9px; height: 318px; border: 4px solid #999; padding: 5px 20px; font: 23px/33px "Liberation Serif", serif; color: #333; -webkit-text-stroke: .3px #333; }
.cbox b { font-size: 27px; }
.cbox p { margin: 22px 0 20px; }
.cbox ul { padding: 0 30px 0 60px; margin: 0; }
.cbox li { margin-bottom: 17px; }
.ccap { text-align: center; margin-top: 28px; font: 26px "Liberation Serif", serif; color: #333; -webkit-text-stroke: .3px #333; }
.proof { padding: 28px 30px; font: italic 23.500px/38px "Liberation Serif", serif; color: #333; -webkit-text-stroke: .3px #333; }
.proof .eq { font-style: normal; font-size: 28px; line-height: 36px; margin-top: 28px; white-space: nowrap; }
.proof .eq-r { margin-top: 11px; padding-left: 240px; }
.thanks { text-align: center; padding-top: 67px; color: #5b0fc0; font: bold 96px/96px "Liberation Serif", serif; }
.thanks span { display: inline-block; transform: scaleX(.5); white-space: nowrap; }
.anyq { padding: 41px 0 0 472px; font: bold 22px "Liberation Sans", sans-serif; color: #333; }

/* status */
.status { height: 23px; flex: none; background: #f3f2f1; display: flex; align-items: center; font: 12px "Liberation Sans", sans-serif; color: #605e5c; padding-left: 21px; white-space: nowrap; position: relative; z-index: 1; }
.st-slide { width: 92px; }
.st-lang { width: 681px; }
.st-notes { margin-left: 15px; }
.st-ntext { margin-left: 5px; width: 39px; }
.st-view { width: 40px; height: 23px; display: flex; align-items: center; justify-content: center; }
.st-view-on { background: #e1dfdd; padding-right: 8px; }
.st-sort { width: 32px; }
.st-pres { margin-left: 8px; }
.st-zoom { margin-left: 9px; width: 24px; }
.st-fit { margin-left: 23px; }
```
